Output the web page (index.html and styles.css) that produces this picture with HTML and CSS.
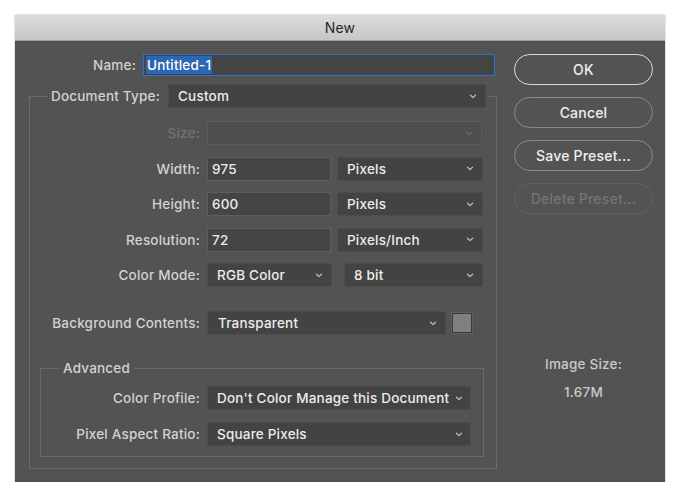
FILE: index.html
```html
<!DOCTYPE html>
<html>
<head>
<meta charset="utf-8">
<title>New</title>
<link rel="stylesheet" href="styles.css">
</head>
<body>
<div class="dialog">
  <div class="titlebar">New</div>
  <div class="content">
    <div class="main">
      <div class="name-row">
        <span class="lbl name-lbl">Name:</span>
        <div class="input focus"><span class="sel">Untitled-1</span></div>
      </div>
      <fieldset class="group outer">
        <legend class="outer-legend">
          <span class="lbl doc-lbl">Document Type:</span>
          <div class="select w-doc"><span>Custom</span><svg class="chev" width="8" height="5" viewBox="0 0 8 5"><path d="M1.5 1.2 L4 3.6 L6.5 1.2"/></svg></div>
        </legend>
        <div class="rows">
          <div class="row">
            <span class="lbl col1 dis">Size:</span>
            <div class="select disabled w-size"><span></span><svg class="chev" width="8" height="5" viewBox="0 0 8 5"><path d="M1.5 1.2 L4 3.6 L6.5 1.2"/></svg></div>
          </div>
          <div class="row">
            <span class="lbl col1">Width:</span>
            <div class="input w-num">975</div>
            <div class="select w-unit"><span>Pixels</span><svg class="chev" width="8" height="5" viewBox="0 0 8 5"><path d="M1.5 1.2 L4 3.6 L6.5 1.2"/></svg></div>
          </div>
          <div class="row">
            <span class="lbl col1">Height:</span>
            <div class="input w-num">600</div>
            <div class="select w-unit"><span>Pixels</span><svg class="chev" width="8" height="5" viewBox="0 0 8 5"><path d="M1.5 1.2 L4 3.6 L6.5 1.2"/></svg></div>
          </div>
          <div class="row">
            <span class="lbl col1">Resolution:</span>
            <div class="input w-num">72</div>
            <div class="select w-unit"><span>Pixels/Inch</span><svg class="chev" width="8" height="5" viewBox="0 0 8 5"><path d="M1.5 1.2 L4 3.6 L6.5 1.2"/></svg></div>
          </div>
          <div class="row">
            <span class="lbl col1">Color Mode:</span>
            <div class="select w-mode"><span>RGB Color</span><svg class="chev" width="8" height="5" viewBox="0 0 8 5"><path d="M1.5 1.2 L4 3.6 L6.5 1.2"/></svg></div>
            <div class="select w-bit"><span>8 bit</span><svg class="chev" width="8" height="5" viewBox="0 0 8 5"><path d="M1.5 1.2 L4 3.6 L6.5 1.2"/></svg></div>
          </div>
          <div class="row bg-row">
            <span class="lbl col1">Background Contents:</span>
            <div class="select w-bg"><span>Transparent</span><svg class="chev" width="8" height="5" viewBox="0 0 8 5"><path d="M1.5 1.2 L4 3.6 L6.5 1.2"/></svg></div>
            <div class="swatch"></div>
          </div>
        </div>
        <fieldset class="group inner">
          <legend class="inner-legend">Advanced</legend>
          <div class="rows adv-rows">
            <div class="row">
              <span class="lbl col2">Color Profile:</span>
              <div class="select w-adv"><span>Don't Color Manage this Document</span><svg class="chev" width="8" height="5" viewBox="0 0 8 5"><path d="M1.5 1.2 L4 3.6 L6.5 1.2"/></svg></div>
            </div>
            <div class="row">
              <span class="lbl col2">Pixel Aspect Ratio:</span>
              <div class="select w-adv"><span>Square Pixels</span><svg class="chev" width="8" height="5" viewBox="0 0 8 5"><path d="M1.5 1.2 L4 3.6 L6.5 1.2"/></svg></div>
            </div>
          </div>
        </fieldset>
      </fieldset>
    </div>
    <div class="side">
      <div class="buttons">
        <div class="btn default">OK</div>
        <div class="btn">Cancel</div>
        <div class="btn">Save Preset...</div>
        <div class="btn off">Delete Preset...</div>
      </div>
      <div class="size-info">
        <div class="size-lbl">Image Size:</div>
        <div class="size-val">1.67M</div>
      </div>
    </div>
  </div>
</div>
</body>
</html>
```
FILE: styles.css
```css
* { box-sizing: border-box; }
html, body { margin: 0; padding: 0; background: #ffffff; }
body {
  font-family: Inter, "Liberation Sans", Arial, sans-serif;
  font-size: 13.5px;
  font-weight: 500;
  letter-spacing: 0.2px;
  color: #d2d2d2;
}
.dialog {
  margin: 15px 0 0 15px;
  width: 650px;
  height: 467px;
  background: #535353;
  box-shadow: 0 0 1px rgba(0,0,0,0.6);
}
.titlebar {
  height: 26px;
  line-height: 25px;
  text-align: center;
  font-size: 14px;
  font-weight: 400;
  color: #262626;
  letter-spacing: 0.2px;
  background: linear-gradient(#dcdcdc, #c6c6c6);
  border-bottom: 1px solid #9e9e9e;
}
.content {
  display: flex;
  padding: 13px 12px 0 14px;
}
.main { width: 468px; }
.name-row {
  display: flex;
  align-items: center;
  height: 22px;
}
.lbl { white-space: nowrap; text-align: right; flex: none; }
.name-lbl { width: 107px; margin-right: 7px; }
.input {
  height: 24px;
  background: #454545;
  border: 1px solid #5e5e5e;
  color: #ececec;
  padding: 0 4px;
  display: flex;
  align-items: center;
  flex: none;
}
.input.focus {
  width: 352px;
  height: 22px;
  border: 1.5px solid #2f6fd0;
  background: #444444;
  padding: 0 2px;
}
.sel {
  background: #2d67b3;
  color: #ffffff;
  line-height: 18px;
  padding: 0 1px;
}
.group {
  margin: 0;
  padding: 0;
  border: 1px solid #6a6a6a;
  min-width: 0;
}
.outer {
  margin-top: 8px;
  width: 468px;
  padding-bottom: 11px;
}
.outer-legend {
  display: flex;
  align-items: center;
  margin-left: 18px;
  padding: 0 3px;
}
.doc-lbl { width: 110px; margin-right: 7px; text-align: left; }
.select {
  height: 24px;
  background: #434343;
  border: 1px solid #4c4c4c;
  border-radius: 2px;
  color: #ececec;
  display: flex;
  align-items: center;
  justify-content: space-between;
  padding: 0 8px 0 9px;
  flex: none;
  white-space: nowrap;
  overflow: hidden;
}
.chev { flex: none; margin-left: 4px; }
.chev path { fill: none; stroke: #c2c2c2; stroke-width: 1.2; stroke-linecap: round; stroke-linejoin: round; }
.select.disabled { background: #4e4e4e; border-color: #5c5c5c; }
.select.disabled .chev path { stroke: #6a6a6a; }
.w-doc { width: 318px; }
.rows {
  margin-top: 13px;
  display: flex;
  flex-direction: column;
  gap: 11.5px;
}
.row {
  display: flex;
  align-items: center;
  height: 24px;
}
.col1 { width: 170px; margin-right: 7px; }
.col2 { width: 159px; margin-right: 7px; }
.dis { color: #727272; }
.w-size { width: 275px; }
.w-num { width: 124px; margin-right: 6px; }
.w-unit { width: 146px; }
.w-mode { width: 125px; margin-right: 12px; }
.w-bit { width: 139px; }
.bg-row { margin-top: 12.5px; }
.w-bg { width: 239px; margin-right: 6px; padding-left: 10px; }
.swatch {
  width: 20px;
  height: 20px;
  background: #7f7f7f;
  border: 1px solid #3a3a3a;
  box-shadow: 0 0 0 1px #5f5f5f;
}
.inner {
  margin: 25px 0 0 10px;
  width: 444px;
  padding-bottom: 10px;
}
.inner-legend {
  margin-left: 18px;
  padding: 0 4px;
  line-height: 16px;
}
.adv-rows { margin-top: 10px; gap: 12px; }
.w-adv { width: 264px; padding-right: 7px; }
.side {
  margin-left: 17px;
  width: 139px;
}
.buttons {
  display: flex;
  flex-direction: column;
  gap: 12px;
}
.btn {
  height: 31px;
  border: 1.5px solid #8a8a8a;
  border-radius: 16px;
  display: flex;
  align-items: center;
  justify-content: center;
  font-size: 14px;
  color: #efefef;
}
.btn.default { border-color: #dadada; }
.btn.off { border-color: #616161; color: #737373; }
.size-info {
  margin-top: 142px;
  text-align: center;
  color: #cacaca;
  line-height: 16px;
}
.size-val { margin-top: 12px; }
```
